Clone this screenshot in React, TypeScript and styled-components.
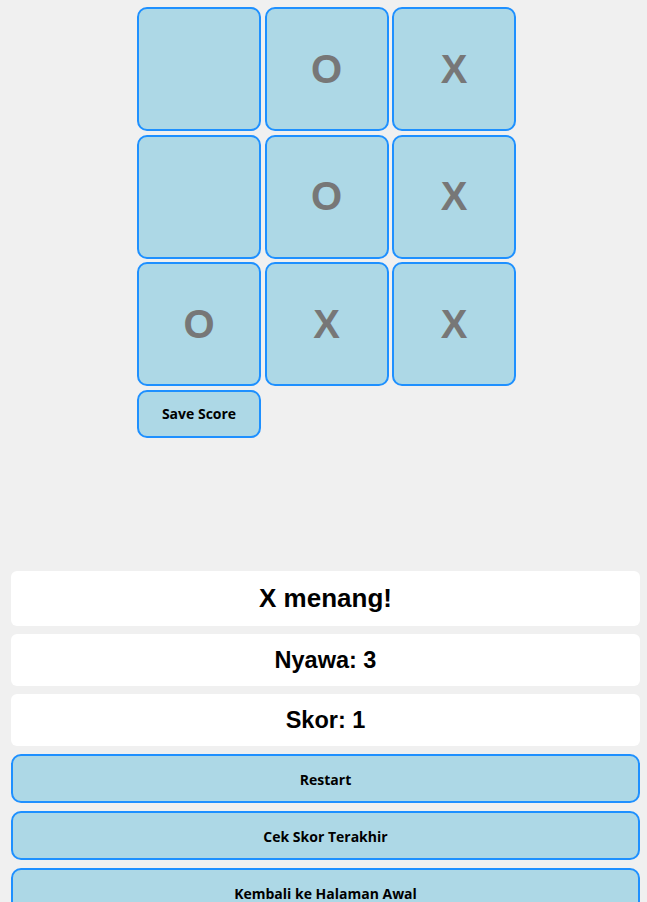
import React from 'react'
import styled, { createGlobalStyle } from 'styled-components'

const board = ['', 'O', 'X', '', 'O', 'X', 'O', 'X', 'X']

const App = () => {
  return (
    <Page>
      <GlobalStyle />
      <Board>
        {board.map((v, i) => (
          <Cell key={i}>{v}</Cell>
        ))}
        <SaveButton>Save Score</SaveButton>
      </Board>
      <Info>
        <Status big>X menang!</Status>
        <Status>Nyawa: 3</Status>
        <Status>Skor: 1</Status>
        <WideButton>Restart</WideButton>
        <WideButton>Cek Skor Terakhir</WideButton>
        <WideButton>Kembali ke Halaman Awal</WideButton>
      </Info>
    </Page>
  )
}

export default App

const GlobalStyle = createGlobalStyle`
body {
  margin: 0;
  background: #f0f0f0;
  font-family: "Liberation Sans", Arial, sans-serif;
}
`

const Page = styled.div`
display: flex;
flex-direction: column;
padding: 7px 0 0;
`

const Board = styled.div`
display: grid;
grid-template-columns: repeat(3, 124px);
grid-template-rows: repeat(3, 124px) 48px;
gap: 3.5px;
padding-left: 137px;
`

const Cell = styled.div`
box-sizing: border-box;
background: #add8e6;
border: 2px solid #1e90ff;
border-radius: 10px;
display: flex;
align-items: center;
justify-content: center;
font-size: 40px;
font-weight: bold;
color: #777;
`

const SaveButton = styled.button`
box-sizing: border-box;
height: 48px;
background: #add8e6;
border: 2px solid #1e90ff;
border-radius: 10px;
font-family: "Open Sans", sans-serif;
font-weight: bold;
font-size: 14px;
color: #000;
`

const Info = styled.div`
display: flex;
flex-direction: column;
gap: 8px;
padding: 0 7px 0 11px;
margin-top: 133.5px;
`

const Status = styled.div<{ big?: boolean }>`
background: #fff;
border-radius: 6px;
display: flex;
align-items: center;
justify-content: center;
height: ${p => (p.big ? 55 : 52)}px;
font-size: ${p => (p.big ? 26 : 23.5)}px;
font-weight: bold;
color: #000;
`

const WideButton = styled.button`
box-sizing: border-box;
height: 49px;
padding-top: 3px;
background: #add8e6;
border: 2px solid #1e90ff;
border-radius: 10px;
font-family: "Open Sans", sans-serif;
font-weight: bold;
font-size: 14px;
color: #000;
`
